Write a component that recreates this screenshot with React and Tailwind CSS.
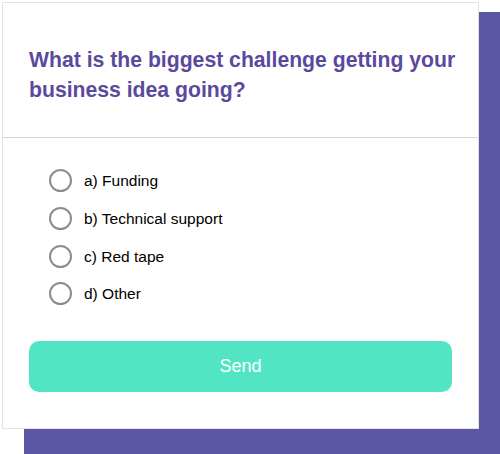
import React, { useState } from "react";

const options = ["a) Funding", "b) Technical support", "c) Red tape", "d) Other"];

const App = () => {
  const [selected, setSelected] = useState(null);

  return (
    <div className="relative w-[500px] h-[454px] bg-white overflow-hidden font-['Liberation_Sans',Arial,sans-serif]">
      {/* Purple backdrop */}
      <div className="absolute left-[24px] top-[12px] w-[490px] h-[460px] bg-[#5c57a5]"></div>

      {/* Card */}
      <div className="relative ml-[2px] mt-[2px] w-[477px] h-[427px] bg-white border border-[#e3e3e3]">
        <div className="h-[135px] border-b border-[#d6d6d6] pt-[42px] pl-[26px] pr-[8px]">
          <h2 className="text-[21.2px] leading-[30px] font-bold text-[#5a4a9d]">
            What is the biggest challenge getting your business idea going?
          </h2>
        </div>

        <ul className="pt-[24px] pl-[46px]">
          {options.map((opt, i) => (
            <li
              key={opt}
              className="flex items-center h-[37.7px] cursor-pointer"
              onClick={() => setSelected(i)}
            >
              <span className="flex items-center justify-center w-[23px] h-[23px] rounded-full border-2 border-[#8c8c8c]">
                {selected === i && <span className="w-[11px] h-[11px] rounded-full bg-[#5c57a5]"></span>}
              </span>
              <span className="ml-[12px] text-[15.5px] text-black">{opt}</span>
            </li>
          ))}
        </ul>

        <div className="px-[26px] mt-[28px]">
          <button className="w-full h-[51px] rounded-[10px] bg-[#52e5c4] text-white text-[18px]">
            Send
          </button>
        </div>
      </div>
    </div>
  );
};

export default App;
